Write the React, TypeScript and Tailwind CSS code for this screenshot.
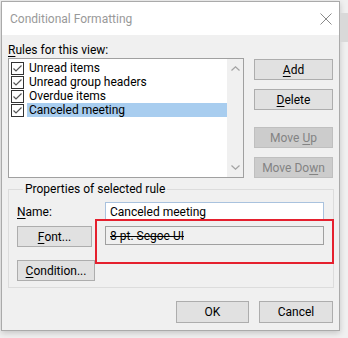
const font = "font-['Roboto','Segoe_UI',sans-serif]";

function Check() {
  return (
    <span className="w-[13px] h-[13px] border border-[#333333] bg-white flex items-center justify-center shrink-0">
      <svg width="11" height="11" viewBox="0 0 11 11">
        <polyline points="1.5,5.5 4,8 9.5,2.5" fill="none" stroke="#555555" strokeWidth="1.2" />
      </svg>
    </span>
  );
}

function Row({ label, selected }: { label: string; selected?: boolean }) {
  return (
    <div className="flex items-center h-[14px] pl-[2px]">
      <Check />
      <span
        className={`ml-[3px] flex-1 h-[14px] flex items-center px-[2px] text-[12px] leading-[14px] text-black ${
          selected ? "bg-[#a8cdef]" : ""
        }`}
      >
        {label}
      </span>
    </div>
  );
}

function Btn({
  children,
  disabled,
  className = "",
}: {
  children: React.ReactNode;
  disabled?: boolean;
  className?: string;
}) {
  return (
    <div
      className={`flex items-center justify-center text-[12px] leading-[14px] border ${
        disabled
          ? "bg-[#cccccc] border-[#bfbfbf] text-[#838383]"
          : "bg-[#e1e1e1] border-[#adadad] text-black"
      } ${className}`}
    >
      {children}
    </div>
  );
}

export default function App() {
  return (
    <div className={`w-[348px] h-[338px] bg-[#f0f0f0] flex ${font}`}>
      <div className="pt-[1px] pl-[1px]">
        <div className="w-[339px] h-[330px] border border-[#aaaaaa] bg-[#f0f0f0] flex flex-col shadow-[0_2px_6px_rgba(0,0,0,0.18)]">
          {/* Title bar */}
          <div className="h-[33px] bg-white flex items-center justify-between pl-[8px] pr-[7px] shrink-0">
            <span className="text-[12px] leading-[16px] text-[#999999] pt-[1px]">Conditional Formatting</span>
            <svg width="12" height="12" viewBox="0 0 12 12" className="mt-[1px]">
              <path d="M0.5 0.5 L11.5 11.5 M11.5 0.5 L0.5 11.5" stroke="#8a8a8a" strokeWidth="1" />
            </svg>
          </div>
          {/* Body */}
          <div className="relative flex-1 pl-[6px] pt-[7px] flex flex-col">
            <div className="w-[325px] flex gap-[10px]">
              <div className="w-[236px] flex flex-col">
                <div className="h-[16px] text-[12px] leading-[16px] text-black">
                  <span className="underline underline-offset-2">R</span>ules for this view:
                </div>
                <div className="h-[120px] border border-[#a0a0a0] bg-white flex">
                  <div className="flex-1 pt-[2px] flex flex-col">
                    <Row label="Unread items" />
                    <Row label="Unread group headers" />
                    <Row label="Overdue items" />
                    <Row label="Canceled meeting" selected />
                  </div>
                  <div className="w-[16px] bg-[#f0f0f0] flex flex-col justify-between items-center py-[7px]">
                    <svg width="9" height="5" viewBox="0 0 9 5">
                      <polyline points="0.5,4.5 4.5,0.8 8.5,4.5" fill="none" stroke="#a3a3a3" strokeWidth="1.2" />
                    </svg>
                    <svg width="9" height="5" viewBox="0 0 9 5">
                      <polyline points="0.5,0.5 4.5,4.2 8.5,0.5" fill="none" stroke="#a3a3a3" strokeWidth="1.2" />
                    </svg>
                  </div>
                </div>
              </div>
              <div className="w-[79px] flex flex-col pt-[17px]">
                <Btn className="h-[21px]">
                  <span className="underline underline-offset-2">A</span>dd
                </Btn>
                <Btn className="h-[21px] mt-[9px]">
                  <span className="underline underline-offset-2">D</span>elete
                </Btn>
                <Btn disabled className="h-[21px] mt-[17px]">
                  Move&nbsp;<span className="underline underline-offset-2">U</span>p
                </Btn>
                <Btn disabled className="h-[21px] mt-[9px]">
                  Move Do<span className="underline underline-offset-2">w</span>n
                </Btn>
              </div>
            </div>

            {/* Group box */}
            <fieldset className="w-[326px] mt-[3px] border border-[#dcdcdc] pl-[8px] pr-[9px] pt-[5px] pb-[6px]">
              <legend className="ml-[6px] px-[2px] text-[12px] leading-[16px] text-black">
                Properties of selected rule
              </legend>
              <div className="flex items-center h-[19px]">
                <span className="w-[88px] text-[12px] leading-[16px] text-black">
                  <span className="underline underline-offset-2">N</span>ame:
                </span>
                <div className="w-[219px] h-[19px] bg-white border border-[#a9c2de] flex items-center pl-[4px] text-[12px] leading-[16px] text-black">
                  Canceled meeting
                </div>
              </div>
              <div className="flex items-start mt-[5px]">
                <Btn className="w-[75px] h-[21px]">
                  <span className="underline underline-offset-2">F</span>ont...
                </Btn>
                <div className="ml-[13px] w-[219px] h-[19px] bg-[#f0f0f0] border border-[#a0a0a0] flex items-center pl-[4px] text-[12px] leading-[16px] text-black line-through">
                  8 pt. Segoe UI
                </div>
              </div>
              <div className="flex mt-[13px]">
                <Btn className="w-[78px] h-[21px]">
                  <span className="underline underline-offset-2">C</span>ondition...
                </Btn>
              </div>
            </fieldset>

            {/* Bottom buttons */}
            <div className="flex mt-[13px] pl-[168px] gap-[10px]">
              <Btn className="w-[73px] h-[22px]">OK</Btn>
              <Btn className="w-[74px] h-[22px]">Cancel</Btn>
            </div>

            {/* Annotation */}
            <div className="absolute left-[93px] top-[184px] w-[239px] h-[45px] border-2 border-[#e5202e]" />
          </div>
        </div>
      </div>
      <div className="flex-1 flex flex-col pt-[13px]">
        <div className="h-[29px] bg-[#d9d9d9]" />
      </div>
    </div>
  );
}
